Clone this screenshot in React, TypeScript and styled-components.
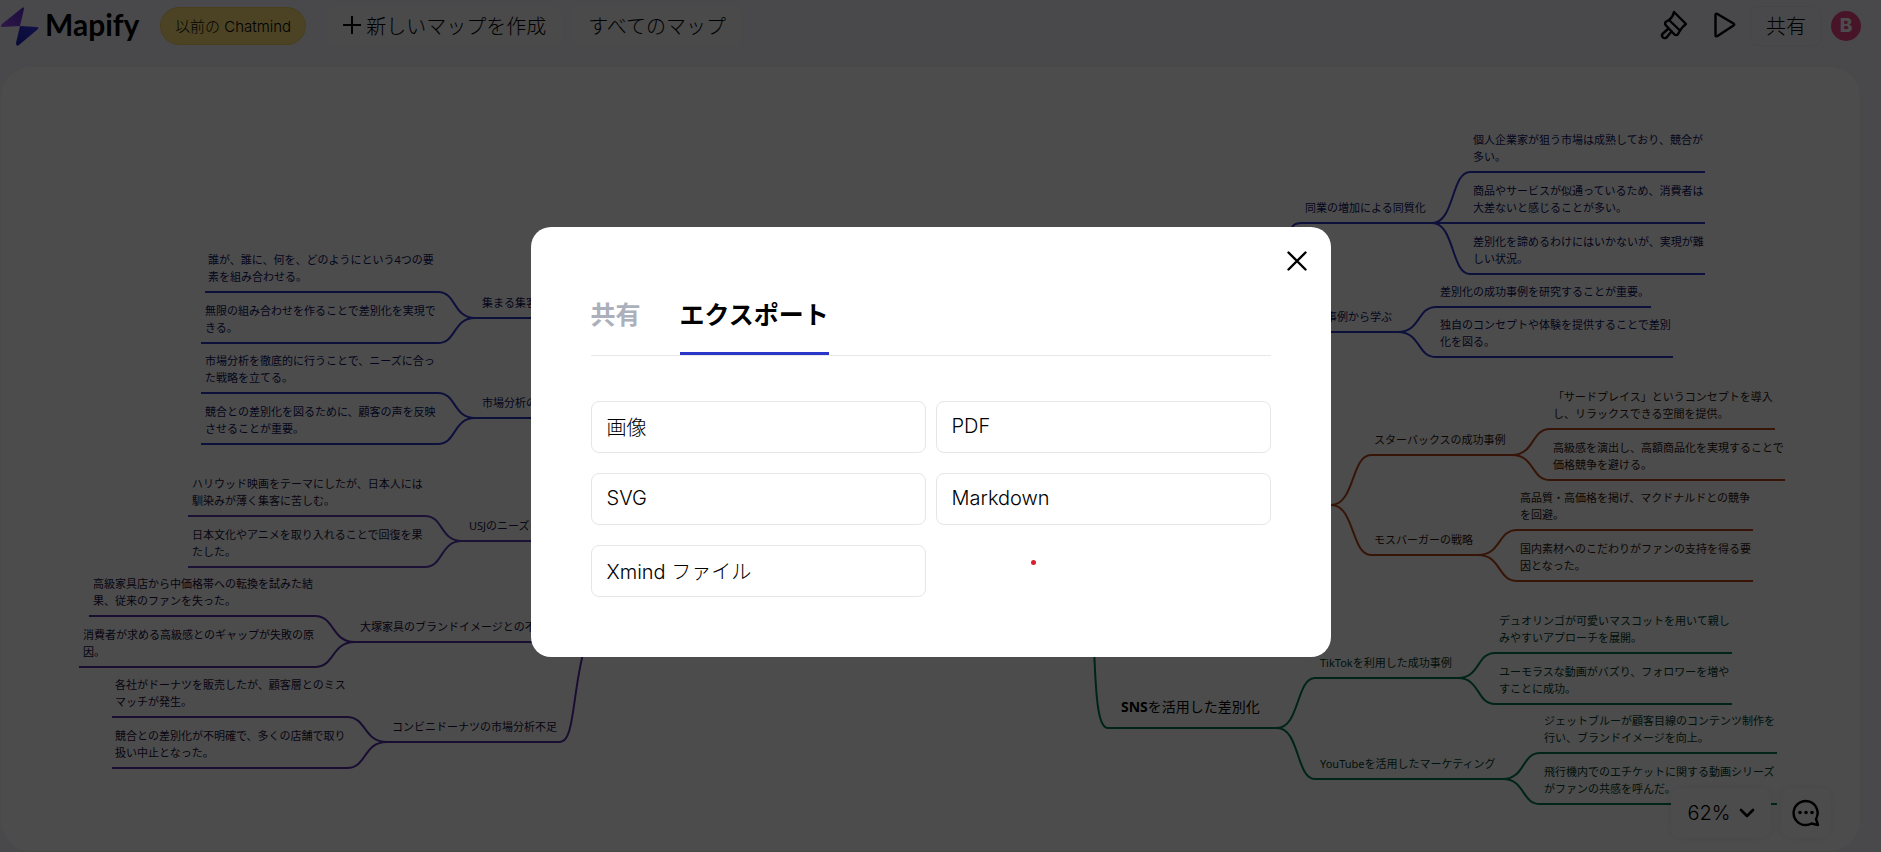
import React from 'react';
import styled, { createGlobalStyle } from 'styled-components';

const GlobalStyle = createGlobalStyle`
  *, *::before, *::after { box-sizing: border-box; }
  html, body, #root { height: 100%; }
  body {
    margin: 0;
    overflow: hidden;
    background: #f4f4fa;
    color: #000;
    font-family: Inter, 'Noto Sans CJK JP', sans-serif;
  }
  button { font: inherit; color: inherit; cursor: pointer; }
`;

const Page = styled.div`
  display: flex;
  flex-direction: column;
  height: 100%;
`;

const Header = styled.header`
  display: flex;
  align-items: center;
  height: 66px;
  padding: 0 20px 14px 0;
`;

const Brand = styled.a`
  display: flex;
  align-items: center;
  gap: 6px;
  width: 160px;
  color: #000;
  font-family: Lato, sans-serif;
  font-size: 30px;
  font-weight: 700;
  line-height: 36px;
  text-decoration: none;
`;

const BrandName = styled.span`
  padding-bottom: 4px;
`;

const LegacyButton = styled.button`
  height: 38px;
  padding: 0 14px 2px;
  border: 1px solid #f0d060;
  border-radius: 19px;
  background: #fbe078;
  font-size: 15px;
  font-weight: 300;
  white-space: nowrap;
`;

const MapActions = styled.nav`
  display: flex;
  gap: 10px;
  margin-left: 21px;
`;

const HeaderButton = styled.button`
  display: flex;
  align-items: center;
  gap: 5px;
  height: 40px;
  padding: 0 15px 2px;
  border: 1px solid #f8f8fc;
  border-radius: 8px;
  background: #f7f7fb;
  font-size: 20px;
  font-weight: 300;
  white-space: nowrap;
`;

const Tools = styled.div`
  display: flex;
  align-items: center;
  margin-left: auto;
`;

const IconButton = styled.button`
  display: flex;
  align-items: center;
  justify-content: center;
  width: 50px;
  height: 40px;
  padding: 0 0 2px;
  border: 0;
  background: none;
`;

const Divider = styled.span`
  width: 1px;
  height: 20px;
  background: #ededf3;
`;

const ShareButton = styled(HeaderButton)`
  background: transparent;
  border-color: #ebebf1;
`;

const Avatar = styled.button`
  width: 30px;
  height: 30px;
  margin-left: 9px;
  padding: 0;
  border: 0;
  border-radius: 50%;
  background: #f04488;
  color: #fff;
  font-size: 19px;
  font-weight: 800;
  line-height: 30px;
`;

const Board = styled.main`
  position: relative;
  flex: 1;
  margin-right: 20px;
  overflow: hidden;
  border-radius: 32px;
  background: #fff;
  box-shadow: inset 0 0 0 1px #f4f4f6;
`;

const Links = styled.svg`
  position: absolute;
  top: 0;
  left: 0;
  fill: none;
  stroke-width: 2;
`;

const Topic = styled.div<{ $x: number; $y: number; $lines: number; $color: string }>`
  position: absolute;
  left: ${(p) => p.$x}px;
  top: ${(p) => p.$y - 7 - 17 * p.$lines}px;
  color: ${(p) => p.$color};
  font-family: 'Noto Sans', 'Noto Sans CJK JP', sans-serif;
  font-size: 11px;
  font-weight: 400;
  line-height: 17px;
  white-space: pre;
`;

const MainTopic = styled.div<{ $x: number; $y: number }>`
  position: absolute;
  left: ${(p) => p.$x}px;
  top: ${(p) => p.$y - 32}px;
  font-family: 'Noto Sans', 'Noto Sans CJK JP', sans-serif;
  font-size: 14px;
  font-weight: 400;
  line-height: 22px;
  white-space: nowrap;
`;

const BoardControls = styled.div`
  position: absolute;
  right: 30px;
  bottom: 14px;
  display: flex;
  gap: 10px;
`;

const ControlButton = styled.button<{ $wide?: boolean }>`
  display: flex;
  align-items: center;
  justify-content: center;
  gap: 8px;
  width: ${(p) => (p.$wide ? 100 : 50)}px;
  height: 50px;
  padding: 0;
  border: 0;
  border-radius: 10px;
  background: #fff;
  box-shadow: 0 0 10px rgba(0, 0, 0, 0.08);
  font-size: 20px;
  font-weight: 300;
`;

const Backdrop = styled.div`
  position: fixed;
  inset: 0;
  display: flex;
  align-items: center;
  justify-content: center;
  padding: 32px 20px 0 0;
  background: rgba(0, 0, 0, 0.7);
`;

const Dialog = styled.section`
  position: relative;
  width: 800px;
  max-width: 90%;
  padding: 60px;
  border-radius: 20px;
  background: #fff;
`;

const CloseButton = styled.button`
  position: absolute;
  top: 19px;
  right: 19px;
  display: flex;
  align-items: center;
  justify-content: center;
  width: 30px;
  height: 30px;
  padding: 0;
  border: 0;
  background: none;
`;

const Tabs = styled.div`
  display: flex;
  gap: 39px;
  border-bottom: 1px solid #e8e8ea;
`;

const Tab = styled.button<{ $active?: boolean }>`
  height: 68px;
  padding: 0 0 9px;
  border: 0;
  border-bottom: 3px solid ${(p) => (p.$active ? '#2a36c8' : 'transparent')};
  background: none;
  color: ${(p) => (p.$active ? '#000' : '#abb0ba')};
  font-size: 25px;
  font-weight: 700;
  line-height: 36px;
`;

const Formats = styled.div`
  display: grid;
  grid-template-columns: 1fr 1fr;
  gap: 20px 10px;
  margin-top: 45px;
`;

const FormatButton = styled.button`
  height: 52px;
  padding: 0 15px 2px;
  border: 1px solid #e6e6e8;
  border-radius: 8px;
  background: #fff;
  font-size: 20px;
  font-weight: 300;
  text-align: left;
`;

const Pointer = styled.span`
  position: absolute;
  left: 500px;
  top: 333px;
  width: 5px;
  height: 5px;
  border-radius: 50%;
  background: #d8202c;
`;

const BLUE = { line: '#3036c8', text: '#0c1060' };
const PURPLE = { line: '#5a3cb4', text: '#1c1440' };
const VIOLET = { line: '#5430a8', text: '#1a0c3c' };
const ORANGE = { line: '#b4481c', text: '#30140c' };
const GREEN = { line: '#007850', text: '#003c2c' };

type Palette = typeof BLUE;
type Leaf = { x: number; y: number; from: number; to: number; text: string };
type Branch = {
  palette: Palette;
  x: number;
  y: number;
  from: number;
  to: number;
  text: string;
  leaves: Leaf[];
};

/* from = the end of an underline that faces the centre of the map, to = its outer end */
const branches: Branch[] = [
  {
    palette: BLUE, x: 1305, y: 157, from: 1301, to: 1432, text: '同業の増加による同質化',
    leaves: [
      { x: 1473, y: 106, from: 1470, to: 1705, text: '個人企業家が狙う市場は成熟しており、競合が\n多い。' },
      { x: 1473, y: 157, from: 1470, to: 1705, text: '商品やサービスが似通っているため、消費者は\n大差ないと感じることが多い。' },
      { x: 1473, y: 208, from: 1470, to: 1705, text: '差別化を諦めるわけにはいかないが、実現が難\nしい状況。' },
    ],
  },
  {
    palette: BLUE, x: 1326, y: 266, from: 1301, to: 1398, text: '事例から学ぶ',
    leaves: [
      { x: 1440, y: 241, from: 1436, to: 1651, text: '差別化の成功事例を研究することが重要。' },
      { x: 1440, y: 291, from: 1436, to: 1673, text: '独自のコンセプトや体験を提供することで差別\n化を図る。' },
    ],
  },
  {
    palette: ORANGE, x: 1374, y: 389, from: 1371, to: 1512, text: 'スターバックスの成功事例',
    leaves: [
      { x: 1553, y: 363, from: 1550, to: 1775, text: '「サードプレイス」というコンセプトを導入\nし、リラックスできる空間を提供。' },
      { x: 1553, y: 414, from: 1550, to: 1785, text: '高級感を演出し、高額商品化を実現することで\n価格競争を避ける。' },
    ],
  },
  {
    palette: ORANGE, x: 1374, y: 489, from: 1371, to: 1478, text: 'モスバーガーの戦略',
    leaves: [
      { x: 1520, y: 464, from: 1517, to: 1753, text: '高品質・高価格を掲げ、マクドナルドとの競争\nを回避。' },
      { x: 1520, y: 515, from: 1517, to: 1753, text: '国内素材へのこだわりがファンの支持を得る要\n因となった。' },
    ],
  },
  {
    palette: GREEN, x: 1320, y: 612, from: 1315, to: 1458, text: 'TikTokを利用した成功事例',
    leaves: [
      { x: 1499, y: 587, from: 1495, to: 1732, text: 'デュオリンゴが可愛いマスコットを用いて親し\nみやすいアプローチを展開。' },
      { x: 1499, y: 638, from: 1495, to: 1732, text: 'ユーモラスな動画がバズり、フォロワーを増や\nすことに成功。' },
    ],
  },
  {
    palette: GREEN, x: 1320, y: 713, from: 1315, to: 1503, text: 'YouTubeを活用したマーケティング',
    leaves: [
      { x: 1544, y: 687, from: 1540, to: 1777, text: 'ジェットブルーが顧客目線のコンテンツ制作を\n行い、ブランドイメージを向上。' },
      { x: 1544, y: 738, from: 1540, to: 1777, text: '飛行機内でのエチケットに関する動画シリーズ\nがファンの共感を呼んだ。' },
    ],
  },
  {
    palette: BLUE, x: 482, y: 252, from: 560, to: 475, text: '集まる集客',
    leaves: [
      { x: 208, y: 226, from: 438, to: 205, text: '誰が、誰に、何を、どのようにという4つの要\n素を組み合わせる。' },
      { x: 205, y: 277, from: 438, to: 201, text: '無限の組み合わせを作ることで差別化を実現で\nきる。' },
    ],
  },
  {
    palette: BLUE, x: 482, y: 352, from: 560, to: 475, text: '市場分析の',
    leaves: [
      { x: 205, y: 327, from: 438, to: 201, text: '市場分析を徹底的に行うことで、ニーズに合っ\nた戦略を立てる。' },
      { x: 205, y: 378, from: 438, to: 201, text: '競合との差別化を図るために、顧客の声を反映\nさせることが重要。' },
    ],
  },
  {
    palette: PURPLE, x: 469, y: 475, from: 560, to: 462, text: 'USJのニーズ',
    leaves: [
      { x: 192, y: 450, from: 425, to: 188, text: 'ハリウッド映画をテーマにしたが、日本人には\n馴染みが薄く集客に苦しむ。' },
      { x: 192, y: 501, from: 425, to: 188, text: '日本文化やアニメを取り入れることで回復を果\nたした。' },
    ],
  },
  {
    palette: VIOLET, x: 360, y: 576, from: 560, to: 355, text: '大塚家具のブランドイメージとの不',
    leaves: [
      { x: 93, y: 550, from: 315, to: 89, text: '高級家具店から中価格帯への転換を試みた結\n果、従来のファンを失った。' },
      { x: 83, y: 601, from: 315, to: 79, text: '消費者が求める高級感とのギャップが失敗の原\n因。' },
    ],
  },
  {
    palette: VIOLET, x: 392, y: 676, from: 560, to: 387, text: 'コンビニドーナツの市場分析不足',
    leaves: [
      { x: 115, y: 651, from: 347, to: 112, text: '各社がドーナツを販売したが、顧客層とのミス\nマッチが発生。' },
      { x: 115, y: 702, from: 347, to: 112, text: '競合との差別化が不明確で、多くの店舗で取り\n扱い中止となった。' },
    ],
  },
];

const curve = (x1: number, y1: number, x2: number, y2: number) => {
  const d = x2 - x1;
  return `M${x1} ${y1} C${x1 + d * 0.6} ${y1} ${x1 + d * 0.5} ${y2} ${x2} ${y2}`;
};

function MindMap() {
  return (
    <>
      <Links width="1861" height="786" aria-hidden="true">
        {branches.map((b) => (
          <g key={b.text} stroke={b.palette.line}>
            <path d={`M${b.from} ${b.y} H${b.to}`} />
            {b.leaves.map((l) => (
              <path key={l.text} d={`${curve(b.to, b.y, l.from, l.y)} H${l.to}`} />
            ))}
          </g>
        ))}
        <path stroke={BLUE.line} d="M1288 172 C1291 160 1294 157 1301 157" />
        <path stroke={ORANGE.line} d={`${curve(1331, 439, 1371, 389)} ${curve(1331, 439, 1371, 489)}`} />
        <path stroke={GREEN.line} d={`M1094 580 C1096 640 1099 662 1108 662 H1277 ${curve(1277, 662, 1315, 612)} ${curve(1277, 662, 1315, 713)}`} />
        <path stroke={VIOLET.line} d="M560 676 C575 676 572 625 585 580" />
      </Links>
      {branches.map((b) => (
        <React.Fragment key={b.text}>
          <Topic $x={b.x} $y={b.y} $lines={1} $color={b.palette.text}>{b.text}</Topic>
          {b.leaves.map((l) => (
            <Topic key={l.text} $x={l.x} $y={l.y} $lines={l.text.split('\n').length} $color={b.palette.text}>
              {l.text}
            </Topic>
          ))}
        </React.Fragment>
      ))}
      <MainTopic $x={1121} $y={662}><b>SNS</b>を活用した差別化</MainTopic>
    </>
  );
}

const BoltLogo = () => (
  <svg width="39" height="40" viewBox="0 0 39 40" aria-hidden="true">
    <defs>
      <linearGradient id="boltTop" x1="1" y1="0" x2="0" y2="1">
        <stop offset="0" stopColor="#5c2ad0" />
        <stop offset="1" stopColor="#9a50f0" />
      </linearGradient>
      <linearGradient id="boltBottom" x1="1" y1="0" x2="0" y2="1">
        <stop offset="0" stopColor="#3a3cf0" />
        <stop offset="1" stopColor="#2020b8" />
      </linearGradient>
    </defs>
    <path fill="url(#boltTop)" d="M22 2 Q24 0 24 3 L20 20 L2 21 Q0 20 2 18 Z" />
    <path fill="url(#boltBottom)" d="M20 20 L37 21 Q39 21 38 23 L19 39 Q16 41 16 37 Z" />
  </svg>
);

const formats = ['画像', 'PDF', 'SVG', 'Markdown', 'Xmind ファイル'];

export default function App() {
  return (
    <Page>
      <GlobalStyle />
      <Header>
        <Brand href="#">
          <BoltLogo />
          <BrandName>Mapify</BrandName>
        </Brand>
        <LegacyButton type="button">以前の Chatmind</LegacyButton>
        <MapActions>
          <HeaderButton type="button">
            <svg width="18" height="18" viewBox="0 0 18 18" stroke="currentColor" strokeWidth="2" aria-hidden="true">
              <path d="M9 0 V18 M0 9 H18" />
            </svg>
            新しいマップを作成
          </HeaderButton>
          <HeaderButton type="button">すべてのマップ</HeaderButton>
        </MapActions>
        <Tools>
          <IconButton type="button" aria-label="スタイル">
            <svg width="28" height="30" viewBox="0 0 28 30" fill="none" stroke="currentColor" strokeWidth="2.4" strokeLinejoin="round" strokeLinecap="round" aria-hidden="true">
              <path d="M14 2 L26 14 Q22 17 20 20.500 L9 10 Q13 7 14 2 Z" />
              <path d="M9 10 L5.500 12 Q4.500 14 6 15.500 L14.500 24.500 Q17 26 18 24 L20 20.500" />
              <path d="M8.500 18.500 L3 23.500 A2.600 2.600 0 0 0 6.500 27.500 L11.500 21.500" />
            </svg>
          </IconButton>
          <Divider />
          <IconButton type="button" aria-label="再生">
            <svg width="24" height="26" viewBox="0 0 24 26" fill="none" stroke="currentColor" strokeWidth="2.400" strokeLinejoin="round" aria-hidden="true">
              <path d="M2.500 3 Q2.500 1 4.500 2 L20.500 11.500 Q22 12.500 20.500 13.500 L4.500 24 Q2.500 25 2.500 23 Z" />
            </svg>
          </IconButton>
          <ShareButton type="button">共有</ShareButton>
          <Avatar type="button" aria-label="アカウント">B</Avatar>
        </Tools>
      </Header>

      <Board>
        <MindMap />
        <BoardControls>
          <ControlButton type="button" $wide>
            62%
            <svg width="16" height="10" viewBox="0 0 16 10" fill="none" stroke="currentColor" strokeWidth="2.600" strokeLinecap="round" strokeLinejoin="round" aria-hidden="true">
              <path d="M2 2 L8 8 L14 2" />
            </svg>
          </ControlButton>
          <ControlButton type="button" aria-label="フィードバック">
            <svg width="28" height="28" viewBox="0 0 28 28" fill="none" stroke="currentColor" strokeWidth="2.400" strokeLinejoin="round" aria-hidden="true">
              <path d="M24 20 A12 12 0 1 0 14 26 Q17 26 19.500 24.500 L26 26 Z" />
              <g fill="currentColor" stroke="none">
                <circle cx="8" cy="13.500" r="1.800" />
                <circle cx="14" cy="13.500" r="1.800" />
                <circle cx="20" cy="13.500" r="1.800" />
              </g>
            </svg>
          </ControlButton>
        </BoardControls>
      </Board>

      <Backdrop>
        <Dialog role="dialog" aria-modal="true" aria-label="エクスポート">
          <CloseButton type="button" aria-label="閉じる">
            <svg width="20" height="20" viewBox="0 0 20 20" stroke="currentColor" strokeWidth="2.400" strokeLinecap="round" aria-hidden="true">
              <path d="M1.500 1.500 L18.500 18.500 M18.500 1.500 L1.500 18.500" />
            </svg>
          </CloseButton>
          <Tabs role="tablist">
            <Tab type="button" role="tab" aria-selected="false">共有</Tab>
            <Tab type="button" role="tab" aria-selected="true" $active>エクスポート</Tab>
          </Tabs>
          <Formats>
            {formats.map((f) => (
              <FormatButton key={f} type="button">{f}</FormatButton>
            ))}
          </Formats>
          <Pointer />
        </Dialog>
      </Backdrop>
    </Page>
  );
}
